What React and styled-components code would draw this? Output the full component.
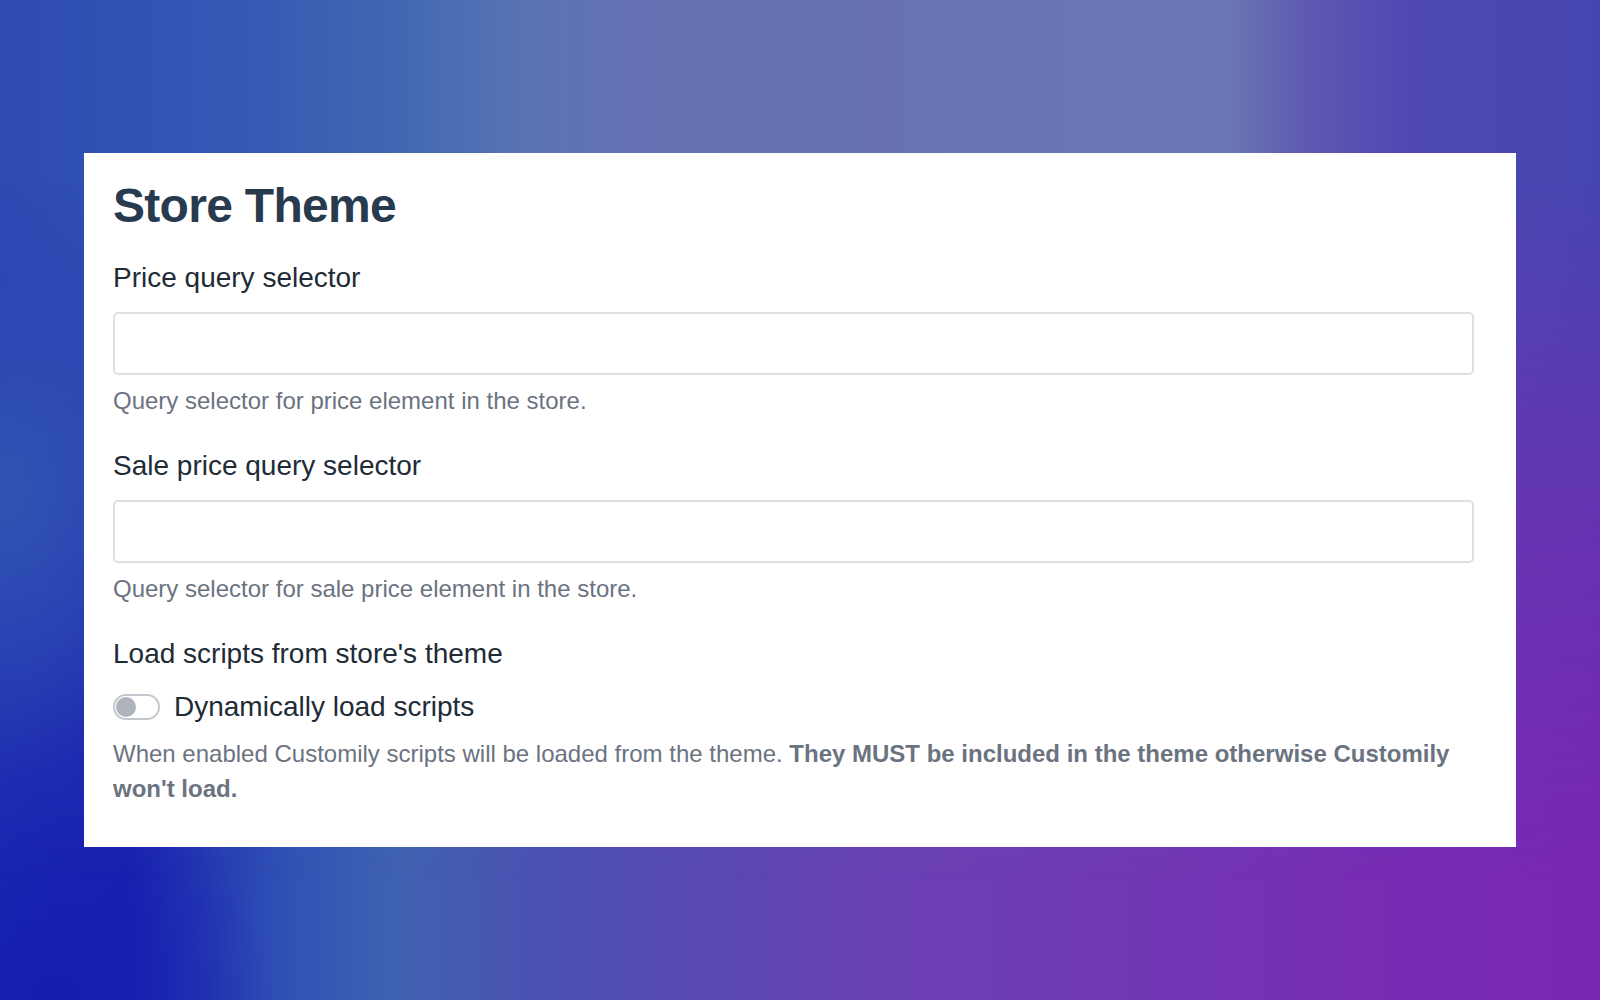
import React, { useState } from "react";
import styled, { createGlobalStyle } from "styled-components";

const GlobalStyle = createGlobalStyle`
	* {
		box-sizing: border-box;
	}
	body {
		margin: 0;
		font-family: "Liberation Sans", Helvetica, Arial, sans-serif;
	}
`;

const Page = styled.div`
	position: relative;
	min-height: 100vh;
	padding: 153px 84px;
	background:
		radial-gradient(ellipse 14% 30% at 0% 48%, rgba(62, 110, 182, 0.75), transparent 100%),
		radial-gradient(ellipse 14% 24% at 3% 100%, rgba(20, 28, 176, 0.9), transparent 100%),
		linear-gradient(
			to right,
			#1c2ab1 0%,
			#1a22b0 8%,
			#3052b4 18%,
			#4062b2 25%,
			#4a52b1 33%,
			#5a48b0 45%,
			#6a40b3 56%,
			#7038b3 70%,
			#772db4 85%,
			#7a27b4 100%
		);

	&::before {
		content: "";
		position: absolute;
		inset: 0;
		background: linear-gradient(
			to right,
			#2e4bb3 0%,
			#3558b4 15%,
			#4168b2 25%,
			#5a74b4 33%,
			#6572b3 40%,
			#6872b1 55%,
			#6a76b3 70%,
			#6a75b4 77%,
			#5e58b3 82%,
			#4f48b1 88%,
			#4746b0 100%
		);
		-webkit-mask-image: linear-gradient(to bottom, #000 0%, #000 18%, rgba(0, 0, 0, 0.35) 55%, transparent 88%);
		mask-image: linear-gradient(to bottom, #000 0%, #000 18%, rgba(0, 0, 0, 0.35) 55%, transparent 88%);
	}
`;

const Card = styled.section`
	position: relative;
	z-index: 1;
	background: #fff;
	padding: 24px 42px 41px 29px;
`;

const Title = styled.h1`
	margin: 0 0 25px;
	font-size: 48px;
	line-height: 58px;
	font-weight: 700;
	letter-spacing: -0.7px;
	color: #283a4e;
`;

const Field = styled.div`
	display: flex;
	flex-direction: column;
	margin-bottom: ${(p) => p.$gap ?? 29}px;
`;

const Label = styled.label`
	font-size: 28px;
	line-height: 36px;
	color: #212b36;
	margin-bottom: ${(p) => p.$space ?? 16}px;
`;

const Input = styled.input`
	height: 63px;
	width: 100%;
	border: 2px solid #dce0e4;
	border-radius: 5px;
	padding: 0 16px;
	font-family: inherit;
	font-size: 24px;
	color: #212b36;
	background: #fff;
	outline: none;
`;

const Help = styled.div`
	margin-top: ${(p) => p.$top ?? 8}px;
	font-size: 24px;
	line-height: ${(p) => p.$lh ?? 36}px;
	color: #6b7380;

	strong {
		font-weight: 700;
	}
`;

const ToggleRow = styled.label`
	display: flex;
	align-items: center;
	gap: 14px;
	font-size: 28px;
	line-height: 36px;
	color: #212b36;
	cursor: pointer;
`;

const Track = styled.span`
	display: flex;
	align-items: center;
	justify-content: ${(p) => (p.$on ? "flex-end" : "flex-start")};
	width: 47px;
	height: 26px;
	padding: 0 1px;
	border: 2px solid ${(p) => (p.$on ? "#5c6ac4" : "#c2c8ce")};
	border-radius: 13px;
	background: ${(p) => (p.$on ? "#5c6ac4" : "#fff")};
	flex-shrink: 0;
`;

const Knob = styled.span`
	width: 20px;
	height: 20px;
	border-radius: 50%;
	background: ${(p) => (p.$on ? "#fff" : "#adb4bc")};
`;

const Toggle = ({ on, onChange }) => (
	<Track $on={on} onClick={onChange}>
		<Knob $on={on} />
	</Track>
);

const App = () => {
	const [dynamic, setDynamic] = useState(false);
	return (
		<>
			<GlobalStyle />
			<Page>
				<Card>
					<Title>Store Theme</Title>
					<Field>
						<Label htmlFor="price">Price query selector</Label>
						<Input id="price" type="text" />
						<Help>Query selector for price element in the store.</Help>
					</Field>
					<Field>
						<Label htmlFor="sale">Sale price query selector</Label>
						<Input id="sale" type="text" />
						<Help>Query selector for sale price element in the store.</Help>
					</Field>
					<Field $gap={0}>
						<Label as="div" $space={17}>
							Load scripts from store's theme
						</Label>
						<ToggleRow>
							<Toggle on={dynamic} onChange={() => setDynamic(!dynamic)} />
							Dynamically load scripts
						</ToggleRow>
						<Help $top={11} $lh={35}>
							When enabled Customily scripts will be loaded from the theme.{" "}
							<strong>
								They MUST be included in the theme otherwise Customily won't
								load.
							</strong>
						</Help>
					</Field>
				</Card>
			</Page>
		</>
	);
};

export default App;
